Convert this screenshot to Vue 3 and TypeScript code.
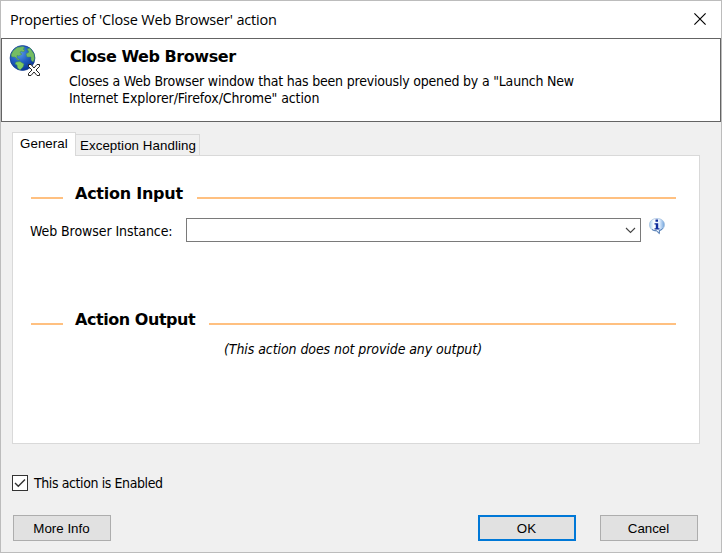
<script setup lang="ts">
import { ref } from 'vue'

const enabled = ref(true)
const activeTab = ref('General')
const tabs = ['General', 'Exception Handling']
</script>

<template>
  <main class="dialog">
    <header class="titlebar">
      <span class="caption">Properties of 'Close Web Browser' action</span>
      <svg class="close" width="12" height="12" viewBox="0 0 12 12" aria-label="Close">
        <path d="M.4.4 11.6 11.6M11.6.4.4 11.6" stroke="#000" stroke-width="1.15" />
      </svg>
    </header>

    <section class="banner">
      <svg class="globe" width="32" height="32" viewBox="0 0 32 32">
        <defs>
          <radialGradient id="sea" cx=".38" cy=".3" r=".72">
            <stop offset="0" stop-color="#5d9cec" />
            <stop offset=".5" stop-color="#2362c4" />
            <stop offset="1" stop-color="#0a3592" />
          </radialGradient>
        </defs>
        <circle cx="13.5" cy="13" r="12.4" fill="url(#sea)" stroke="#123e91" stroke-width=".8" />
        <path d="M4 6 8 2.500 14 1.500 16 3 14 4 16 5.500 14 7 12 6 11 8 13 9 10 11 8 10.500 8 13 11 15 9 15 6 12 3 12 2 10Z" fill="#75bd63" stroke="#3c8b56" stroke-width=".5" />
        <path d="M18 4 21 3 25 9 25.500 14 24 17 22 15 22 12 18 12 17 9 20 7Z" fill="#75bd63" stroke="#3c8b56" stroke-width=".5" />
        <path d="M7 17 11 16.500 15 19 14 22 11 25 8.500 23 8 20 6 19Z" fill="#80cb62" stroke="#3c8b56" stroke-width=".5" />
        <path d="M19.500 19.500h2.500l3 3.500 3-3.500h2.500v2l-3.500 3.500 3.500 3.500v2H28l-3-3.500-3 3.500h-2.500v-2l3.500-3.500-3.500-3.500Z" fill="#fff" stroke="#222" stroke-width="1" stroke-linejoin="round" />
      </svg>
      <div class="banner-text">
        <h1>Close Web Browser</h1>
        <p>
          <span class="line-one">Closes a Web Browser window that has been previously opened by a "Launch New</span><br />
          <span class="line-two">Internet Explorer/Firefox/Chrome" action</span>
        </p>
      </div>
    </section>

    <nav class="tabs">
      <div v-for="tab in tabs" :key="tab" class="tab" :class="{ active: tab === activeTab }" @click="activeTab = tab">
        {{ tab }}
      </div>
    </nav>

    <section class="page">
      <div class="divider"><i class="stub"></i><h2 class="input-title">Action Input</h2><i class="rule"></i></div>
      <div class="field">
        <label>Web Browser Instance:</label>
        <div class="combo">
          <svg width="11" height="7" viewBox="0 0 11 7"><path d="m1 1 4.500 4.500L10 1" fill="none" stroke="#444" stroke-width="1.1" /></svg>
        </div>
        <svg class="info" width="16" height="17" viewBox="0 0 16 17">
          <defs>
            <linearGradient id="bubble">
              <stop offset="0" stop-color="#a9cfee" /><stop offset=".3" stop-color="#fff" />
              <stop offset=".65" stop-color="#e5f1ff" /><stop offset="1" stop-color="#70a3dc" />
            </linearGradient>
          </defs>
          <path d="M8 .5c4.500 0 7.500 2.600 7.500 6.200 0 3-2 5.300-5 6.100v3L7.500 13C3.300 13 .5 10.400.5 6.700S3.500.5 8 .5Z" fill="url(#bubble)" stroke="#9dbbdc" stroke-width=".7" />
          <path d="M13.500 10.500Q12.500 12 10.300 12.600V15.500L7.500 12.800Q5 12.800 3 11.500" fill="none" stroke="#426da9" stroke-width=".9" />
          <path d="M6.500 1.500h2.500v2.300h-2.500ZM5.500 5.300h3.700v5h1.300v1.200H5.500v-1.200h1.300V6.500H5.500Z" fill="#102c9b" />
        </svg>
      </div>
      <div class="divider output"><i class="stub"></i><h2 class="output-title">Action Output</h2><i class="rule"></i></div>
      <p class="empty">(This action does not provide any output)</p>
    </section>

    <label class="enabled" @click.prevent="enabled = !enabled">
      <span class="box">
        <svg v-if="enabled" width="14" height="14" viewBox="0 0 14 14"><path d="m2 7 3.300 3.300L12 3.600" fill="none" stroke="#333" stroke-width="1.400" /></svg>
      </span>
      <span class="enabled-text">This action is Enabled</span>
    </label>

    <footer class="buttons">
      <button class="more">More Info</button>
      <button class="ok">OK</button>
      <button class="cancel">Cancel</button>
    </footer>
  </main>
</template>

<style>
body { margin: 0; }
</style>

<style scoped>
* { box-sizing: border-box; }
.dialog {
  width: 722px; height: 553px; border: 1px solid #bcbcbc; background: #f0f0f0;
  display: flex; flex-direction: column; color: #000; overflow: hidden;
  font: 14px/17px "DejaVu Sans Condensed", "DejaVu Sans", sans-serif; font-stretch: condensed;
  white-space: nowrap;
}
h1, h2, p { margin: 0; }
.titlebar { height: 37px; flex: none; background: #fff; display: flex; justify-content: space-between; padding: 10px 15px 0 9px; }
.caption { font: 14.500px/17px "Open Sans", sans-serif; letter-spacing: -.17px; }
.close { margin-top: 2px; }
.banner { height: 84px; flex: none; background: #fff; border: 1px solid #646464; display: flex; padding: 6px 0 0 7px; }
.globe { flex: none; }
.banner-text { padding: 2px 0 0 29px; }
h1, h2 { font: bold 16px/20px "DejaVu Sans", sans-serif; letter-spacing: -.45px; }
.banner-text p { margin: 6px 0 0 -1px; }
.line-one { letter-spacing: -.2px; }
.line-two { letter-spacing: -.1px; }
.tabs { height: 33px; flex: none; padding: 10px 0 0 11px; display: flex; align-items: flex-end; font: 13.333px/16px "Liberation Sans", sans-serif; letter-spacing: .06px; }
.tab { height: 21px; width: 124px; border: 1px solid #d9d9d9; border-width: 1px 1px 0 0; padding: 3px 0 0 4px; }
.tab.active { height: 24px; width: 64px; margin-bottom: -1px; background: #fff; border-left-width: 1px; padding: 3px 0 0 7px; position: relative; }
.page { width: 688px; height: 289px; flex: none; margin-left: 11px; border: 1px solid #d9d9d9; background: #fff; padding-top: 28px; }
.divider { display: flex; height: 20px; padding: 0 23px 0 18px; }
.stub, .rule { height: 2px; background: #ffc080; margin-top: 13px; }
.stub { width: 32px; margin-right: 12px; }
.rule { flex: 1; }
.input-title { width: 122px; letter-spacing: -.25px; }
.output-title { width: 134px; }
.field { display: flex; height: 25px; margin-top: 14px; padding-left: 17px; }
.field label { width: 156px; padding-top: 5px; letter-spacing: -.08px; }
.combo { width: 455px; height: 24px; border: 1px solid #7a7a7a; display: flex; justify-content: flex-end; align-items: center; padding-right: 4px; }
.info { margin-left: 8px; }
.divider.output { margin-top: 67px; }
.empty { margin-top: 11px; padding-left: 211px; font-style: italic; letter-spacing: -.08px; }
.enabled { display: flex; height: 16px; flex: none; margin: 31px 0 0 11px; }
.box { width: 16px; height: 16px; border: 1px solid #333; background: #fff; display: flex; }
.enabled-text { margin-left: 6px; letter-spacing: -.4px; line-height: 16px; }
.buttons { display: flex; margin: 24px 0 0 12px; }
button { width: 98px; height: 26px; border: 1px solid #adadad; background: #e1e1e1; color: #000; padding: 2px 1px 0 0; font: 13.333px/16px "Liberation Sans", sans-serif; }
.ok { margin-left: 367px; border: 2px solid #0078d7; }
.cancel { margin-left: 24px; }
</style>
